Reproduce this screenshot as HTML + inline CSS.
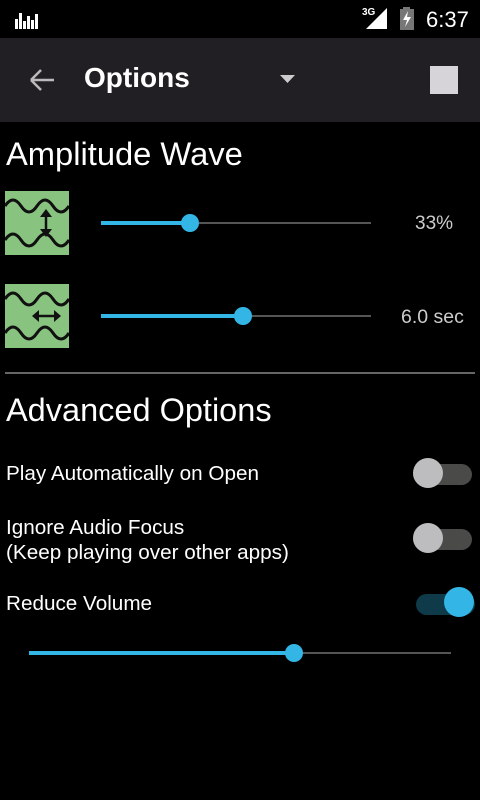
<!DOCTYPE html>
<html><head><style>
body{margin:0;width:480px;height:800px;background:#000;font-family:"Liberation Sans",sans-serif;color:#fff;position:relative;overflow:hidden}
.a{position:absolute}
.track{position:absolute;height:2px;background:#555}
.fill{position:absolute;height:4px;background:#33b5e5}
.thumb{position:absolute;width:18px;height:18px;border-radius:50%;background:#33b5e5}
.lbl{position:absolute;font-size:20.7px;color:#fff}
.tt{position:absolute;width:59px;height:21px;border-radius:11px;background:#4a4a48}
.th{position:absolute;width:30px;height:30px;border-radius:50%;background:#bdbdbf}
</style></head><body>
<div class="a" style="left:0;top:0;width:480px;height:38px;background:#000"></div>
<div class="a" style="left:15px;top:11px;font-size:0">
<svg width="26" height="18"><g fill="#fff"><rect x="0" y="8" width="3" height="10"/><rect x="4" y="2" width="3" height="16"/><rect x="8" y="10" width="3" height="8"/><rect x="12" y="5" width="3" height="13"/><rect x="16" y="9" width="3" height="9"/><rect x="20" y="3" width="3" height="15"/></g></svg></div>
<div class="a" style="left:362px;top:7px;font-size:10px;font-weight:bold">3G</div>
<svg class="a" style="left:366px;top:8px" width="22" height="22"><polygon points="0,21 21,21 21,0" fill="#fff"/></svg>
<svg class="a" style="left:400px;top:7px" width="16" height="23"><rect x="3" y="0" width="7" height="3" fill="#777"/><rect x="0" y="2" width="14" height="21" fill="#777"/><polygon points="8,4 3,13 7,13 5,20 11,10 7,10" fill="#fff"/></svg>
<div class="a" style="left:426px;top:7px;font-size:22px">6:37</div>
<div class="a" style="left:0;top:38px;width:480px;height:84px;background:#221f24"></div>
<svg class="a" style="left:28px;top:67px" width="28" height="28"><path d="M3 13H26M3 13L13 3M3 13L13 23" stroke="#bbb" stroke-width="2.5" fill="none"/></svg>
<div class="a" style="left:84px;top:62px;font-size:28px;font-weight:bold">Options</div>
<svg class="a" style="left:280px;top:75px" width="16" height="10"><polygon points="0,0 15,0 7.5,8" fill="#ccc"/></svg>
<div class="a" style="left:430px;top:66px;width:28px;height:28px;background:#d6d4d8"></div>
<div class="a" style="left:6px;top:135px;font-size:32.7px">Amplitude Wave</div>
<svg class="a" style="left:5px;top:191px" width="64" height="64"><rect width="64" height="64" fill="#88c47f"/><path d="M0 15q8-12 16 0t16 0 16 0 16 0M0 49q8-12 16 0t16 0 16 0 16 0" stroke="#111" stroke-width="3" fill="none"/><path d="M41 22V42" stroke="#111" stroke-width="2.5"/><polygon points="35,26 47,26 41,18" fill="#111"/><polygon points="35,38 47,38 41,46" fill="#111"/></svg>
<svg class="a" style="left:5px;top:284px" width="64" height="64"><rect width="64" height="64" fill="#88c47f"/><path d="M0 15q8-12 16 0t16 0 16 0 16 0M0 49q8-12 16 0t16 0 16 0 16 0" stroke="#111" stroke-width="3" fill="none"/><path d="M30 32H52" stroke="#111" stroke-width="2.5"/><polygon points="34,26 34,38 27,32" fill="#111"/><polygon points="49,26 49,38 56,32" fill="#111"/></svg>
<div class="track" style="left:101px;top:222px;width:270px"></div>
<div class="fill" style="left:101px;top:221px;width:89px"></div>
<div class="thumb" style="left:181px;top:214px"></div>
<div class="a" style="left:415px;top:213px;font-size:19px;color:#ccc">33%</div>
<div class="track" style="left:101px;top:315px;width:270px"></div>
<div class="fill" style="left:101px;top:314px;width:142px"></div>
<div class="thumb" style="left:234px;top:307px"></div>
<div class="a" style="left:401px;top:306px;font-size:19.5px;color:#ccc">6.0 sec</div>
<div class="a" style="left:5px;top:372px;width:470px;height:2px;background:#666"></div>
<div class="a" style="left:6px;top:392px;font-size:32.5px">Advanced Options</div>
<div class="lbl" style="left:6px;top:462px">Play Automatically on Open</div>
<div class="tt" style="left:413px;top:464px"></div><div class="th" style="left:413px;top:458px"></div>
<div class="lbl" style="left:6px;top:515px;line-height:25px">Ignore Audio Focus<br>(Keep playing over other apps)</div>
<div class="tt" style="left:413px;top:529px"></div><div class="th" style="left:413px;top:523px"></div>
<div class="lbl" style="left:6px;top:592px">Reduce Volume</div>
<div class="tt" style="left:416px;top:594px;background:#0e3a4a"></div><div class="th" style="left:444px;top:587px;background:#33b5e5"></div>
<div class="track" style="left:29px;top:652px;width:422px"></div>
<div class="fill" style="left:29px;top:651px;width:265px"></div>
<div class="thumb" style="left:285px;top:644px"></div>
</body></html>
